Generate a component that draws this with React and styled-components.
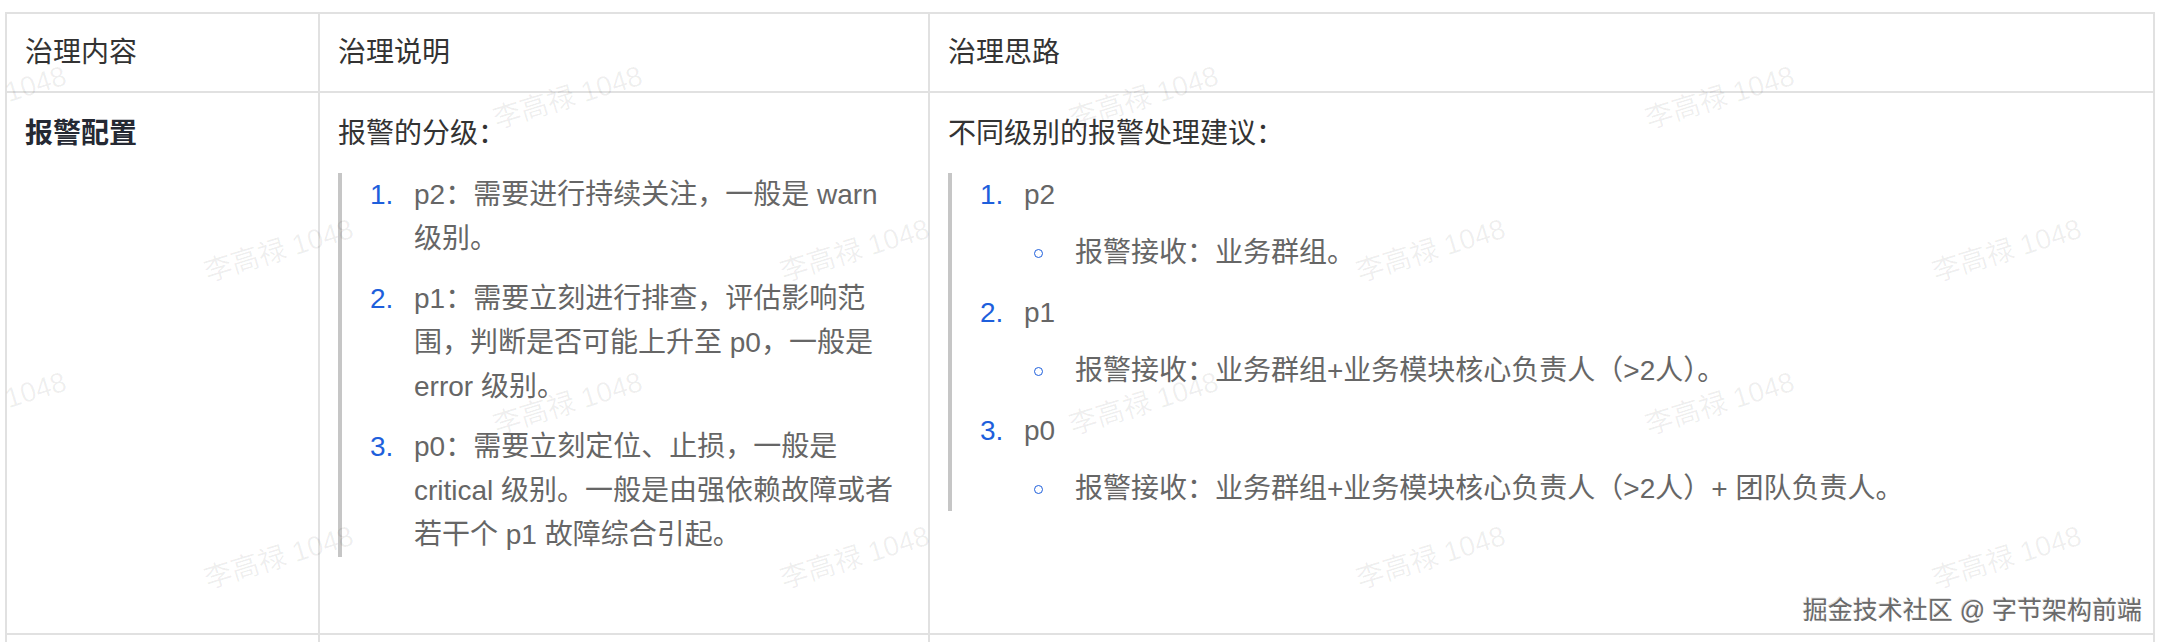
import React from "react";
import styled, { createGlobalStyle } from "styled-components";

const GlobalStyle = createGlobalStyle`
  html, body {
    margin: 0;
    padding: 0;
    background: #ffffff;
  }
  body {
    font-family: "Liberation Sans", "Noto Sans CJK SC", sans-serif;
    overflow: hidden;
  }
`;

const levels = [
  "p2：需要进行持续关注，一般是 warn 级别。",
  "p1：需要立刻进行排查，评估影响范围，判断是否可能上升至 p0，一般是 error 级别。",
  "p0：需要立刻定位、止损，一般是 critical 级别。一般是由强依赖故障或者若干个 p1 故障综合引起。",
];

const advice = [
  { name: "p2", receive: "报警接收：业务群组。" },
  { name: "p1", receive: "报警接收：业务群组+业务模块核心负责人（>2人）。" },
  { name: "p0", receive: "报警接收：业务群组+业务模块核心负责人（>2人）+ 团队负责人。" },
];

// watermark tiles: rows alternate between two x offsets
const marks = [];
[67, 220, 373, 527].forEach((top, row) => {
  const xs = row % 2 === 0 ? [-85, 491, 1067, 1643] : [202, 778, 1354, 1930];
  xs.forEach((left) => marks.push({ left: left + 76, top: top + 28 }));
});

const App = () => {
  return (
    <>
      <GlobalStyle />
      <Page>
        <Table>
          <colgroup>
            <col style={{ width: 313 }} />
            <col style={{ width: 610 }} />
            <col />
          </colgroup>
          <thead>
            <tr>
              <HeadCell>治理内容</HeadCell>
              <HeadCell>治理说明</HeadCell>
              <HeadCell>治理思路</HeadCell>
            </tr>
          </thead>
          <tbody>
            <tr>
              <Cell>
                <Strong>报警配置</Strong>
              </Cell>
              <Cell $narrow>
                <Para>报警的分级：</Para>
                <Quote>
                  <OrderList>
                    {levels.map((text, i) => (
                      <Item key={i}>
                        <Num>{i + 1}.</Num>
                        <ItemBody>{text}</ItemBody>
                      </Item>
                    ))}
                  </OrderList>
                </Quote>
              </Cell>
              <Cell>
                <Para>不同级别的报警处理建议：</Para>
                <Quote>
                  <OrderList>
                    {advice.map((a, i) => (
                      <Item key={a.name}>
                        <Num>{i + 1}.</Num>
                        <ItemBody>
                          {a.name}
                          <SubList>
                            <SubItem>
                              <Bullet />
                              <span>{a.receive}</span>
                            </SubItem>
                          </SubList>
                        </ItemBody>
                      </Item>
                    ))}
                  </OrderList>
                </Quote>
              </Cell>
            </tr>
            <tr>
              <EmptyCell />
              <EmptyCell />
              <EmptyCell />
            </tr>
          </tbody>
        </Table>

        <Watermarks>
          {marks.map((m, i) => (
            <Mark key={i} style={{ left: m.left, top: m.top }}>
              李高禄 1048
            </Mark>
          ))}
        </Watermarks>
        <Credit>掘金技术社区 @ 字节架构前端</Credit>
      </Page>
    </>
  );
};

const Page = styled.div`
  position: relative;
  padding: 12px 0 0 5px;
  width: 2162px;
  height: 642px;
  box-sizing: border-box;
`;

const Table = styled.table`
  width: 2150px;
  table-layout: fixed;
  border-collapse: collapse;
  font-size: 28px;
  line-height: 44px;
  color: #333333;
`;

const HeadCell = styled.th`
  border: 2px solid #e1e1e1;
  padding: 17px 18px 16px;
  text-align: left;
  font-weight: 400;
  vertical-align: top;
`;

const Cell = styled.td`
  border: 2px solid #e1e1e1;
  padding: 19px ${(p) => (p.$narrow ? "30px" : "18px")} 76px 18px;
  vertical-align: top;
`;

const EmptyCell = styled.td`
  border: 2px solid #e1e1e1;
  height: 80px;
`;

const Strong = styled.strong`
  font-weight: 700;
  color: #252933;
`;

const Para = styled.p`
  margin: 0 0 17px;
`;

const Quote = styled.blockquote`
  margin: 0;
  padding-left: 28px;
  border-left: 4px solid #c6c6c6;
  color: #666666;
`;

const OrderList = styled.ol`
  list-style: none;
  margin: 0;
  padding: 0;
`;

const Item = styled.li`
  display: grid;
  grid-template-columns: 44px 1fr;
  & + & {
    margin-top: 16px;
  }
`;

const Num = styled.span`
  color: #1e5fdc;
`;

const ItemBody = styled.div`
  min-width: 0;
`;

const SubList = styled.ul`
  list-style: none;
  margin: 14px 0 0;
  padding: 0;
`;

const SubItem = styled.li`
  display: grid;
  grid-template-columns: 51px 1fr;
  align-items: center;
`;

const Bullet = styled.span`
  width: 7px;
  height: 7px;
  margin-left: 10px;
  border: 1.5px solid #1e5fdc;
  border-radius: 50%;
`;

const Watermarks = styled.div`
  position: absolute;
  inset: 0;
  overflow: hidden;
  pointer-events: none;
`;

const Mark = styled.span`
  position: absolute;
  transform: translate(-50%, -50%) rotate(-17deg);
  white-space: nowrap;
  font-size: 28px;
  color: rgba(0, 0, 0, 0.065);
`;

const Credit = styled.div`
  position: absolute;
  top: 595px;
  right: 20px;
  font-size: 25px;
  line-height: 30px;
  color: #6a6a6a;
  text-shadow: 1px 1px 0 #ffffff, -1px -1px 0 rgba(0, 0, 0, 0.15);
  pointer-events: none;
`;

export default App;
